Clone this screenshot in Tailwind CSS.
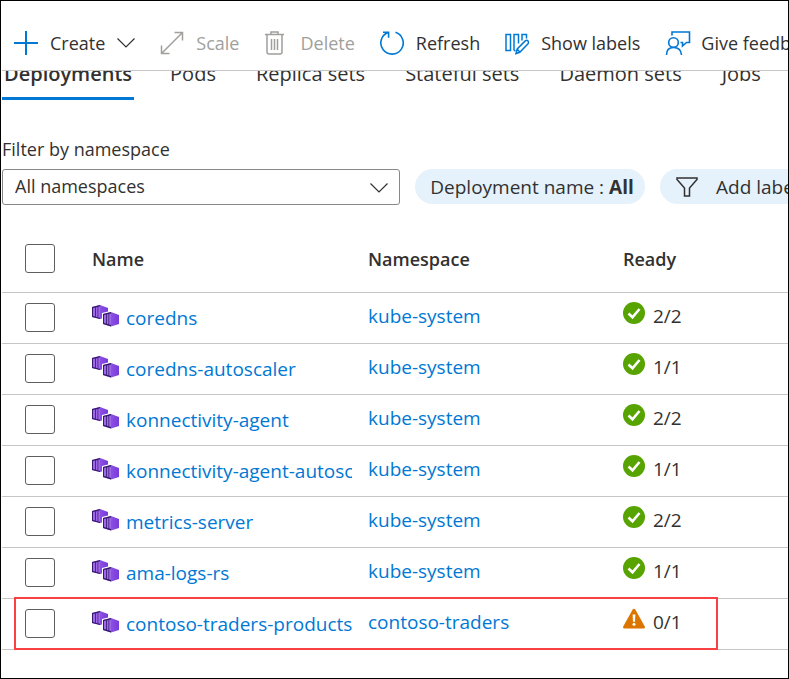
<!DOCTYPE html>
<html lang="en">
<head>
<meta charset="utf-8">
<meta name="viewport" content="width=device-width, initial-scale=1">
<title>Deployments</title>
<script src="https://cdn.jsdelivr.net/npm/@tailwindcss/browser@4"></script>
</head>
<body class="bg-white text-[#323130] font-['Open_Sans','Noto_Sans',sans-serif] text-[19px] leading-7">
<svg class="absolute w-0 h-0" aria-hidden="true">
  <defs>
    <linearGradient id="side" x1="0" x2="1" y1="0" y2="0"><stop offset="0" stop-color="#a067e8"/><stop offset="1" stop-color="#773adc"/></linearGradient>
    <symbol id="workload" viewBox="0 0 28 22">
      <path d="M0 2 8 0 16 3V12L8 14 0 12Z" fill="url(#side)"/>
      <path d="M0 2 8 0V14L0 12Z" fill="#341a6e"/>
      <path d="M1 3 3 2.5V11.5L1 11ZM3.8 2.4 5.6 2V12.2L3.8 11.8ZM6.3 1.8 8 1.3V12.8L6.3 12.4Z" fill="#a067e8"/>
      <path d="M10 8 18 6H20V20H10Z" fill="#fff"/>
      <path d="M11 9 19 7 27 10V19L19 21.500 11 19Z" fill="url(#side)"/>
      <path d="M11 9 19 7V21.500L11 19Z" fill="#341a6e"/>
      <path d="M12 10 14 9.500V18.500L12 18ZM14.800 9.400 16.500 9V19.200L14.800 18.800ZM17.200 8.800 19 8.400V19.900L17.200 19.400Z" fill="#a067e8"/>
    </symbol>
    <symbol id="ok" viewBox="0 0 22 22">
      <circle cx="11" cy="11" r="11" fill="#57a300"/>
      <path d="M5.500 11.500 9.500 15.300 16.500 7" fill="none" stroke="#fff" stroke-width="2.600"/>
    </symbol>
    <symbol id="warn" viewBox="0 0 22 22">
      <path d="M9.700 1.500Q11 0 12.300 1.500L21.800 18.500Q22.200 20.500 20.500 20.500H1.500Q-.2 20.500 .2 18.500Z" fill="#db7500"/>
      <path d="M9.600 6.500H12.400L12 13.700H10Z" fill="#fff"/><circle cx="11" cy="16.300" r="1.500" fill="#fff"/>
    </symbol>
  </defs>
</svg>
<div class="min-h-screen border border-black overflow-hidden pl-px">
  <header class="flex items-center gap-[25px] h-[70px] pt-[14px] pl-3 border-b border-[#c8c6c4] whitespace-nowrap text-lg">
    <button class="flex items-center shrink-0">
      <svg class="w-6 h-6 mr-3" viewBox="0 0 24 24" fill="none" stroke="#0078d4" stroke-width="2"><path d="M12 0V24M0 12H24"/></svg>
      Create
      <svg class="w-[18px] h-[10px] ml-3" viewBox="0 0 18 10" fill="none" stroke="#323130" stroke-width="1.200"><path d="M.5 .5 9 9 17.500 .5"/></svg>
    </button>
    <button disabled class="flex items-center shrink-0 text-[#a19f9d]">
      <svg class="w-6 h-6 mr-3" viewBox="0 0 24 24" fill="none" stroke="#a19f9d" stroke-width="1.500"><path d="M2 22 22 2M14.500 1.500H22.500V9.500M1.500 14.500V22.500H9.500"/></svg>
      Scale
    </button>
    <button disabled class="flex items-center shrink-0 text-[#a19f9d]">
      <svg class="w-6 h-6 mr-3" viewBox="0 0 24 24" fill="none" stroke="#a19f9d" stroke-width="1.500"><path d="M1 3.500H20M7 3.500V1H14V3.500M3 3.500V21Q3 23 5 23H16Q18 23 18 21V3.500M7.500 8V19M10.500 8V19M13.500 8V19"/></svg>
      Delete
    </button>
    <button class="flex items-center shrink-0">
      <svg class="w-6 h-6 mr-3" viewBox="0 0 24 24" fill="none" stroke="#0078d4" stroke-width="1.600"><path d="M15.500 1.300A11.200 11.200 0 1 1 8 1.500M3 1.200H8.600V6.800"/></svg>
      Refresh
    </button>
    <button class="flex items-center shrink-0">
      <svg class="w-6 h-6 mr-3" viewBox="0 0 24 24" fill="none" stroke="#0078d4" stroke-width="1.500"><path d="M1 3.500H5.500V19.500H1ZM9 19.500V3.500H13.500V12.500M9 19.500H10.500M17 9.500V3.500H21.500V7.500M11 22.500 12.200 18 20.500 9.700Q22 8.800 23.200 10.200 24 11.600 22.800 13L14.800 21.300ZM12.200 18 14.800 21.300"/></svg>
      Show labels
    </button>
    <button class="flex items-center shrink-0">
      <svg class="w-[26px] h-6 mr-[10px]" viewBox="0 0 26 24" fill="none" stroke="#0078d4" stroke-width="1.600"><circle cx="8.500" cy="11.500" r="4.800"/><path d="M1.500 24Q1.500 16.500 8.500 16.500 16 16.500 16.500 24M7 4.500V1H24.500V11.500H21.500L17.500 15V11.500H15.500"/></svg>
      Give feedback
    </button>
  </header>

  <nav class="flex items-end h-[29px] overflow-hidden whitespace-nowrap gap-9 text-xl leading-7">
    <a href="#" class="shrink-0 h-[40px] px-[2px] border-b-[3px] border-[#0078d4] font-semibold">Deployments</a>
    <a href="#" class="shrink-0 h-[40px] pr-1">Pods</a>
    <a href="#" class="shrink-0 h-[40px] pr-1">Replica sets</a>
    <a href="#" class="shrink-0 h-[40px] pr-1">Stateful sets</a>
    <a href="#" class="shrink-0 h-[40px] pr-1">Daemon sets</a>
    <a href="#" class="shrink-0 h-[40px]">Jobs</a>
  </nav>

  <section class="pt-[35px]">
    <label for="ns" class="block h-[34px] text-lg leading-7">Filter by namespace</label>
    <div class="flex items-start gap-[15px] whitespace-nowrap">
      <div class="relative w-[398px] shrink-0">
        <select id="ns" class="block appearance-none w-full h-9 border border-[#8a8886] rounded-[3px] bg-white pl-3 pr-10 pb-[2px] text-lg"><option>All namespaces</option></select>
        <svg class="absolute right-3 top-[14px] w-[18px] h-[10px] pointer-events-none" viewBox="0 0 18 10" fill="none" stroke="#323130" stroke-width="1.200"><path d="M.5 .5 9 9 17.500 .5"/></svg>
      </div>
      <button class="shrink-0 h-[35px] w-[230px] pl-1 rounded-full bg-[#e5f1fb]">Deployment name : <b class="font-bold">All</b></button>
      <button class="shrink-0 h-[35px] pl-4 pr-5 rounded-full bg-[#e5f1fb] flex items-center gap-[18px]">
        <svg class="w-[22px] h-5" viewBox="0 0 22 20" fill="none" stroke="#323130" stroke-width="1.500"><path d="M1 1H21V2.500L13.500 11V19H8.500V11L1 2.500Z"/></svg>
        Add label filter
      </button>
    </div>
  </section>

  <div class="relative mt-[21px]">
    <table class="w-full table-fixed border-collapse text-left whitespace-nowrap">
      <colgroup><col class="w-[90px]"><col class="w-[276px]"><col class="w-[255px]"><col></colgroup>
      <thead class="text-lg">
        <tr class="h-[66px] border-b border-[#c8c6c4]">
          <th class="pl-[23px]"><input type="checkbox" aria-label="Select all" class="block appearance-none w-[30px] h-[29px] border border-[#605e5c] rounded-[3px]"></th>
          <th class="font-semibold">Name</th><th class="font-semibold">Namespace</th><th class="font-semibold">Ready</th>
        </tr>
      </thead>
      <tbody id="rows"></tbody>
    </table>
    <div class="absolute left-3 right-[70px] bottom-0 h-[53px] border-2 border-[#f94144] pointer-events-none"></div>
  </div>
</div>
<script>
  const data = [
    ['coredns', 'kube-system', '2/2', 'ok'],
    ['coredns-autoscaler', 'kube-system', '1/1', 'ok'],
    ['konnectivity-agent', 'kube-system', '2/2', 'ok'],
    ['konnectivity-agent-autoscaler', 'kube-system', '1/1', 'ok'],
    ['metrics-server', 'kube-system', '2/2', 'ok'],
    ['ama-logs-rs', 'kube-system', '1/1', 'ok'],
    ['contoso-traders-products', 'contoso-traders', '0/1', 'warn']
  ];
  document.getElementById('rows').innerHTML = data.map(([name, ns, ready, state]) => `
    <tr class="h-[51px] border-b border-[#c8c6c4]">
      <td class="pl-[23px]"><input type="checkbox" aria-label="Select ${name}" class="block appearance-none w-[30px] h-[29px] border border-[#605e5c] rounded-[3px]"></td>
      <td class="pr-4"><div class="flex items-center gap-[6px]"><svg class="w-7 h-[22px] shrink-0 mb-1"><use href="#workload"/></svg><a href="#" class="min-w-0 overflow-hidden text-[#0078d4]">${name}</a></div></td>
      <td class="pb-1"><a href="#" class="text-[#0078d4]">${ns}</a></td>
      <td class="pb-1"><div class="flex items-center gap-2"><svg class="w-[22px] h-[22px] mb-[6px]"><use href="#${state}"/></svg>${ready}</div></td>
    </tr>`).join('');
</script>
</body>
</html>
